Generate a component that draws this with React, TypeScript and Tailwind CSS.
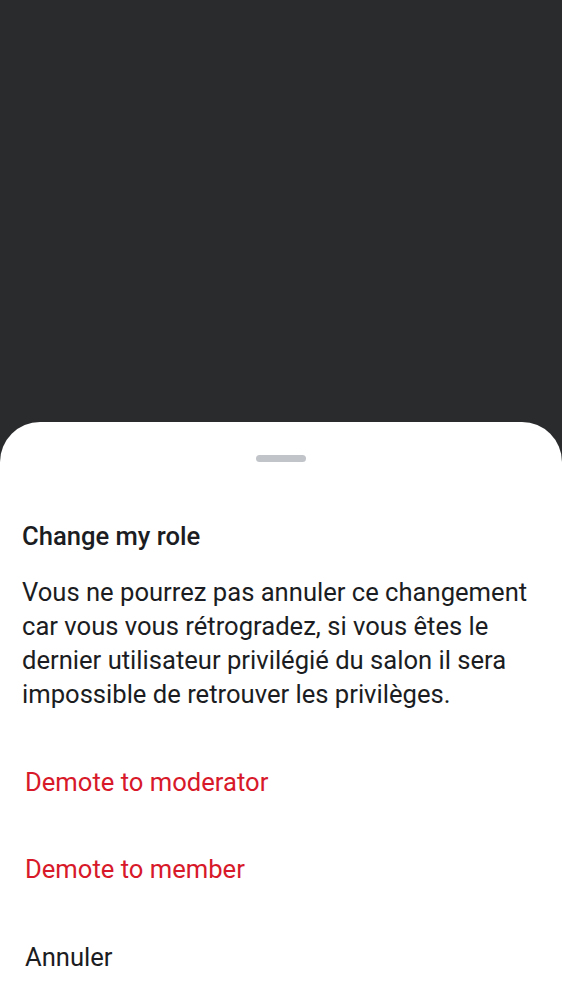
import React from 'react';

const actions = [
  { label: 'Demote to moderator', danger: true },
  { label: 'Demote to member', danger: true },
  { label: 'Annuler', danger: false },
];

export default function App() {
  return (
    <div className="h-[1000px] w-full bg-[#2a2b2d] flex flex-col justify-end overflow-hidden" style={{ fontFamily: 'Roboto, "Noto Sans", sans-serif' }}>
      <div className="bg-white rounded-t-[40px] h-[578px] flex flex-col">
        {/* drag handle */}
        <div className="flex justify-center pt-[33px]">
          <div className="w-[50px] h-[7px] rounded-full bg-[#c1c5ca]" />
        </div>

        <h2 className="mt-[59px] px-[22px] text-[25.6px] leading-[30px] font-medium text-[#1b1d22]">Change my role</h2>
        <p className="mt-[24px] px-[22px] text-[25.6px] leading-[34px] text-[#1b1d22]">
          Vous ne pourrez pas annuler ce changement car vous vous rétrogradez, si vous êtes le dernier utilisateur privilégié du salon il sera impossible de retrouver les privilèges.
        </p>

        <div className="mt-[27px] flex flex-col">
          {actions.map((a) => (
            <button
              key={a.label}
              className={`h-[87.5px] px-[25px] text-left text-[25.6px] ${a.danger ? 'text-[#d7192a]' : 'text-[#1b1d22]'}`}
            >
              {a.label}
            </button>
          ))}
        </div>
      </div>
    </div>
  );
}
